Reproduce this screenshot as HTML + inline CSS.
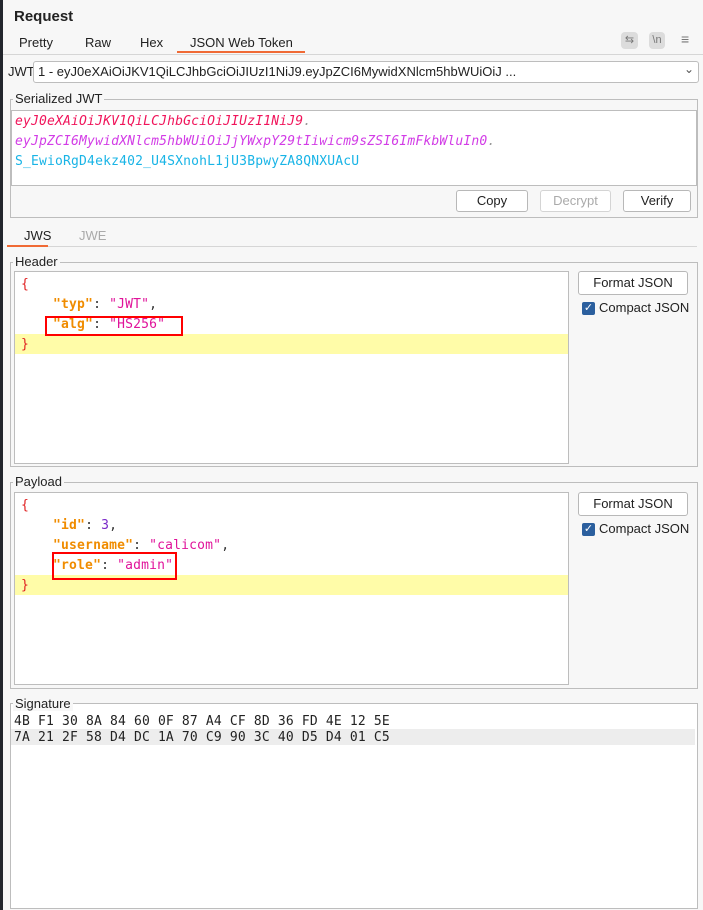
<!DOCTYPE html>
<html><head><meta charset="utf-8"><style>
*{box-sizing:border-box;margin:0;padding:0}
body{width:703px;height:910px;background:#f7f7f7;position:relative;overflow:hidden;font-family:"Liberation Sans","DejaVu Sans",sans-serif;font-size:13px;color:#222}
.a{position:absolute}
.mono{font-family:"DejaVu Sans Mono","Liberation Mono",monospace;font-size:13px;white-space:pre;letter-spacing:0.18px}
.fs{position:absolute;border:1px solid #bdbdbd}
.lg{position:absolute;background:#f7f7f7;padding:0 2px;font-size:13px;color:#222}
.ed{position:absolute;background:#fff;border:1px solid #bdbdbd}
.btn{position:absolute;background:#fff;border:1px solid #b8b8b8;border-radius:3px;text-align:center;font-size:13px;line-height:20px}
.k{color:#f08c00;font-weight:bold}.s{color:#e0139a}.p{color:#333}.r{color:#e02020}.n{color:#7a28c8}
.cb{position:absolute;width:13px;height:13px;background:#2b5f9e;border-radius:2px;color:#fff;font-size:11px;line-height:13px;text-align:center;font-weight:bold}
</style></head><body>
<div class="a" style="left:0;top:0;width:3px;height:910px;background:#23262d"></div>
<div class="a" style="left:14px;top:8px;font-weight:bold;font-size:15px">Request</div>
<div class="a" style="left:19px;top:35px">Pretty</div>
<div class="a" style="left:85px;top:35px">Raw</div>
<div class="a" style="left:140px;top:35px">Hex</div>
<div class="a" style="left:190px;top:35px">JSON Web Token</div>
<div class="a" style="left:177px;top:51px;width:128px;height:2px;background:#f06a35"></div>
<div class="a" style="left:3px;top:54px;width:700px;height:1px;background:#d6d6d6"></div>
<div class="a" style="left:621px;top:32px;width:17px;height:17px;background:#dcdcdc;border-radius:4px;color:#777;font-size:11px;text-align:center;line-height:17px">⇆</div>
<div class="a" style="left:649px;top:32px;width:16px;height:17px;background:#dcdcdc;border-radius:4px;color:#777;font-size:11px;text-align:center;line-height:17px">\n</div>
<div class="a" style="left:681px;top:31px;color:#777;font-size:14px">≡</div>
<div class="a" style="left:8px;top:64px">JWT</div>
<div class="a" style="left:33px;top:61px;width:666px;height:22px;background:#fff;border:1px solid #bdbdbd;border-radius:3px;padding:2px 0 0 4px;white-space:nowrap;overflow:hidden">1 - eyJ0eXAiOiJKV1QiLCJhbGciOiJIUzI1NiJ9.eyJpZCI6MywidXNlcm5hbWUiOiJ ...</div>
<div class="a" style="left:684px;top:62px;color:#555;font-size:12px">⌄</div>
<div class="fs" style="left:10px;top:99px;width:688px;height:119px"></div>
<div class="lg" style="left:13px;top:91px">Serialized JWT</div>
<div class="ed" style="left:11px;top:110px;width:686px;height:76px"></div>
<div class="a mono" style="left:15px;top:112px;line-height:20px;font-style:italic"><span style="color:#f0145a">eyJ0eXAiOiJKV1QiLCJhbGciOiJIUzI1NiJ9</span><span style="color:#999">.</span>
<span style="color:#d23ce6">eyJpZCI6MywidXNlcm5hbWUiOiJjYWxpY29tIiwicm9sZSI6ImFkbWluIn0</span><span style="color:#999">.</span>
<span style="color:#19b4e6;font-style:normal">S_EwioRgD4ekz402_U4SXnohL1jU3BpwyZA8QNXUAcU</span></div>
<div class="btn" style="left:456px;top:190px;width:72px;height:22px">Copy</div>
<div class="btn" style="left:540px;top:190px;width:71px;height:22px;color:#aaa;border-color:#d4d4d4">Decrypt</div>
<div class="btn" style="left:623px;top:190px;width:68px;height:22px">Verify</div>
<div class="a" style="left:24px;top:228px">JWS</div>
<div class="a" style="left:79px;top:228px;color:#aaa">JWE</div>
<div class="a" style="left:7px;top:245px;width:41px;height:2px;background:#f06a35"></div>
<div class="a" style="left:48px;top:246px;width:649px;height:1px;background:#d6d6d6"></div>
<div class="fs" style="left:10px;top:262px;width:688px;height:205px"></div>
<div class="lg" style="left:13px;top:254px">Header</div>
<div class="ed" style="left:14px;top:271px;width:555px;height:193px"></div>
<div class="a" style="left:15px;top:334px;width:553px;height:20px;background:#fffca8"></div>
<div class="a mono" style="left:21px;top:275px;line-height:20px"><span class="r">{</span>
    <span class="k">"typ"</span><span class="p">: </span><span class="s">"JWT"</span><span class="p">,</span>
    <span class="k">"alg"</span><span class="p">: </span><span class="s">"HS256"</span>
<span class="r">}</span></div>
<div class="a" style="left:45px;top:316px;width:138px;height:20px;border:2px solid #f00"></div>
<div class="btn" style="left:578px;top:271px;width:110px;height:24px;line-height:22px">Format JSON</div>
<div class="cb" style="left:582px;top:302px">✓</div>
<div class="a" style="left:599px;top:300px">Compact JSON</div>
<div class="fs" style="left:10px;top:482px;width:688px;height:207px"></div>
<div class="lg" style="left:13px;top:474px">Payload</div>
<div class="ed" style="left:14px;top:492px;width:555px;height:193px"></div>
<div class="a" style="left:15px;top:575px;width:553px;height:20px;background:#fffca8"></div>
<div class="a mono" style="left:21px;top:496px;line-height:20px"><span class="r">{</span>
    <span class="k">"id"</span><span class="p">: </span><span class="n">3</span><span class="p">,</span>
    <span class="k">"username"</span><span class="p">: </span><span class="s">"calicom"</span><span class="p">,</span>
    <span class="k">"role"</span><span class="p">: </span><span class="s">"admin"</span>
<span class="r">}</span></div>
<div class="a" style="left:52px;top:552px;width:125px;height:28px;border:2px solid #f00"></div>
<div class="btn" style="left:578px;top:492px;width:110px;height:24px;line-height:22px">Format JSON</div>
<div class="cb" style="left:582px;top:523px">✓</div>
<div class="a" style="left:599px;top:521px">Compact JSON</div>
<div class="fs" style="left:10px;top:703px;width:688px;height:206px;background:#fff"></div>
<div class="lg" style="left:13px;top:696px">Signature</div>
<div class="a" style="left:11px;top:729px;width:684px;height:16px;background:#ededed"></div>
<div class="a mono" style="left:14px;top:714px;line-height:16px;color:#222;letter-spacing:0.17px">4B F1 30 8A 84 60 0F 87 A4 CF 8D 36 FD 4E 12 5E
7A 21 2F 58 D4 DC 1A 70 C9 90 3C 40 D5 D4 01 C5</div>
</body></html>
